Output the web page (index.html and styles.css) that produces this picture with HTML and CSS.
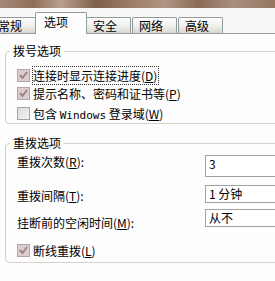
FILE: index.html
```html
<!DOCTYPE html>
<html lang="zh-CN">
<head>
<title>选项</title>
<meta charset="utf-8">
<meta name="viewport" content="width=device-width, initial-scale=1">
<link rel="stylesheet" href="styles.css">
</head>
<body>

<div class="wallpaper"></div>

<div class="tabs">
  <div class="tab first">常规</div>
  <div class="tab active">选项</div>
  <div class="tab">安全</div>
  <div class="tab">网络</div>
  <div class="tab">高级</div>
</div>

<div class="panel">
  <fieldset class="group dial">
    <legend>拨号选项</legend>
    <label class="check-row">
      <span class="box checked"><svg width="11" height="11" viewBox="0 0 11 11"><path d="M2 5 L4.5 8 L9 2" fill="none" stroke="#a47e80" stroke-width="2"/></svg></span>
      <span class="focus">连接时显示连接进度(<u>D</u>)</span>
    </label>
    <label class="check-row">
      <span class="box checked"><svg width="11" height="11" viewBox="0 0 11 11"><path d="M2 5 L4.5 8 L9 2" fill="none" stroke="#a47e80" stroke-width="2"/></svg></span>
      <span>提示名称、密码和证书等(<u>P</u>)</span>
    </label>
    <label class="check-row third">
      <span class="box"></span>
      <span>包含 <span class="mono">Windows</span> 登录域(<u>W</u>)</span>
    </label>
  </fieldset>

  <fieldset class="group redial">
    <legend>重拨选项</legend>
    <div class="field-row top">
      <span class="field-label">重拨次数(<u>R</u>):</span>
      <div class="input tall">3</div>
    </div>
    <div class="field-row second">
      <span class="field-label">重拨间隔(<u>T</u>):</span>
      <div class="input">1 分钟</div>
    </div>
    <div class="field-row third">
      <span class="field-label low">挂断前的空闲时间(<u>M</u>):</span>
      <div class="input">从不</div>
    </div>
    <label class="check-row last">
      <span class="box checked"><svg width="11" height="11" viewBox="0 0 11 11"><path d="M2 5 L4.5 8 L9 2" fill="none" stroke="#a47e80" stroke-width="2"/></svg></span>
      <span>断线重拨(<u>L</u>)</span>
    </label>
  </fieldset>
</div>

</body>
</html>
```

FILE: styles.css
```css
* {
  box-sizing: border-box;
}

body {
  margin: 0;
  overflow: hidden;
  background: #f8f8f6;
  font-family: "Noto Sans CJK SC", "Liberation Sans", sans-serif;
  font-size: 12px;
  color: #000;
}

u {
  text-decoration: underline;
  text-underline-offset: 1px;
}

/* blurred desktop strip above the dialog */
.wallpaper {
  height: 8px;
  background: linear-gradient(90deg, #a48b78 0%, #8e6d58 12%, #b8a090 22%, #7f5f49 35%, #9c7d68 48%, #b09582 60%, #8a6b56 72%, #a8907e 85%, #96765f 100%);
}

/* tab strip */
.tabs {
  display: flex;
  align-items: flex-end;
  height: 26px;
  margin-left: -9px;
  border-bottom: 1px solid #919b9c;
}

.tab {
  height: 16px;
  width: 45px;
  padding: 0 0 0 6px;
  line-height: 15px;
  margin-right: 1px;
  border: 1px solid #919b9c;
  border-bottom: none;
  border-radius: 2px 2px 0 0;
  background: linear-gradient(#fdfdfd, #efefea 55%, #d9d7d0);
}

.tab.first {
  width: 45px;
  margin-right: 1px;
}

.tab.active {
  height: 22px;
  width: 52px;
  padding-left: 8px;
  margin: 0 0 -1px -2px;
  line-height: 18px;
  background: #fdfdfd;
}

.tab.active + .tab {
  margin-left: -1px;
}

.panel {
  background: #fdfdfd;
  height: 247px;
  padding-top: 9px;
}

/* group boxes */
.group {
  margin: 0 -60px 0 5px;
  padding: 0 0 0 11px;
  border: 1px solid #d5d3c8;
  border-radius: 4px;
}

.group legend {
  margin-left: -7px;
  padding: 0 3px;
  line-height: 16px;
}

.dial {
  padding-top: 7px;
  padding-bottom: 1px;
}

.redial {
  margin-top: 11px;
  padding-top: 4px;
  padding-bottom: 3px;
}

.check-row {
  display: flex;
  align-items: center;
  height: 18px;
}

.check-row.third {
  margin-top: 2px;
}

.check-row.last {
  margin-top: 14px;
}

.box {
  width: 13px;
  height: 13px;
  margin-right: 3px;
  border: 1px solid #a9a3a6;
  background: linear-gradient(135deg, #dcdcdc, #f4f4f4);
  display: flex;
  align-items: center;
  justify-content: center;
}

.box.checked {
  border-color: #b7a2a5;
  background: #dccdcf;
}

.focus {
  outline: 1px dotted #333;
  outline-offset: 0;
  padding-right: 1px;
}

.mono {
  font-family: "DejaVu Sans Mono", "Liberation Mono", monospace;
  font-size: 11px;
}

/* label + value rows */
.field-row {
  display: flex;
  align-items: flex-end;
}

.field-row.top {
  align-items: flex-start;
}

.field-row.second {
  margin-top: 8px;
}

.field-row.third {
  margin-top: 6px;
}

.field-label {
  width: 188px;
  line-height: 14px;
}

.field-label.low {
  margin-bottom: -3px;
}

.input {
  width: 100px;
  height: 18px;
  padding: 0 3px;
  line-height: 16px;
  border: 1px solid #9ea3a8;
  background: #fff;
}

.input.tall {
  height: 22px;
}
```
